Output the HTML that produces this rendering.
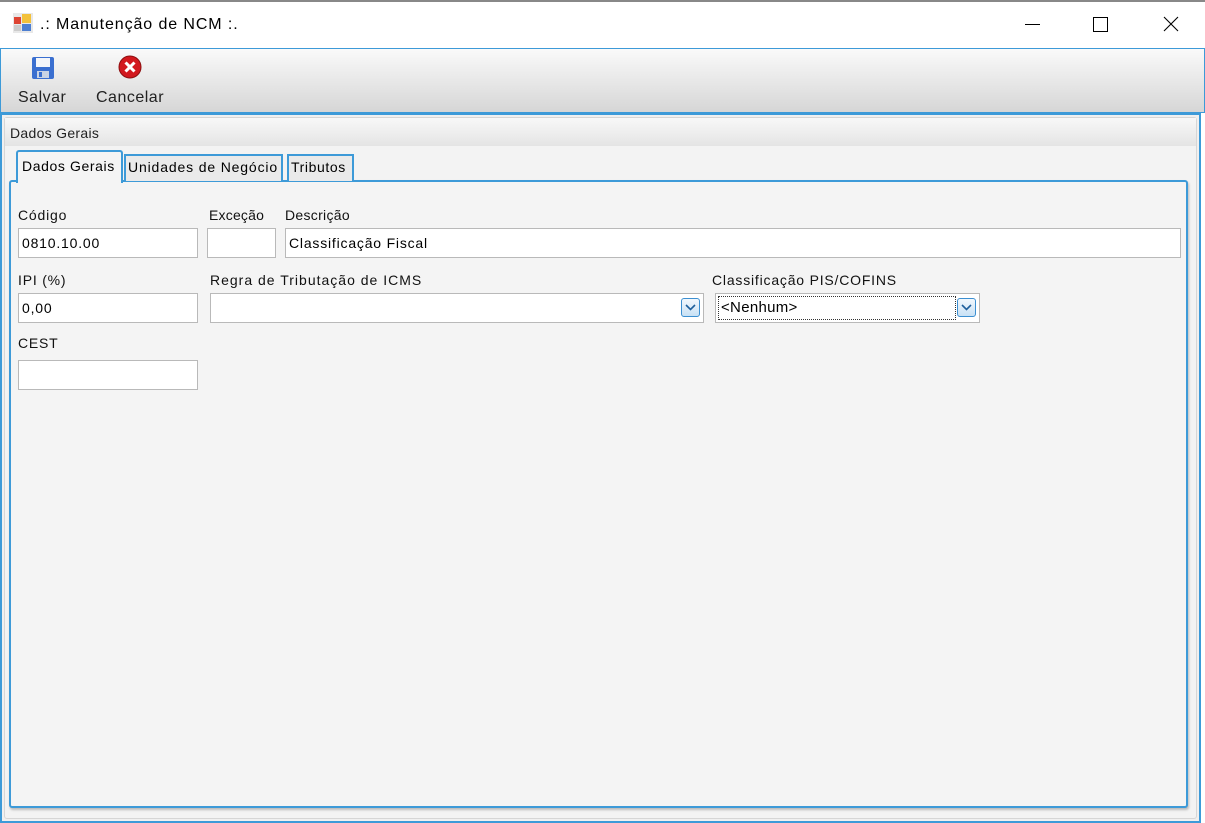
<!DOCTYPE html>
<html><head><meta charset="utf-8"><style>
*{box-sizing:border-box;margin:0;padding:0}
body{width:1205px;height:823px;background:#fff;font-family:"Liberation Sans",sans-serif;font-size:14px;color:#000;position:relative;overflow:hidden;letter-spacing:0.8px}
.a{position:absolute}
.inp{position:absolute;background:#fff;border:1px solid #b9b9b9;height:30px;padding:6px 3px;font-size:14px;white-space:nowrap}
.lbl{position:absolute;font-size:14px;color:#111;white-space:nowrap}
.dd{position:absolute;width:19px;height:19px;border:1px solid #3c8fd1;border-radius:3px;background:linear-gradient(#f2f8fd,#c8e1f5)}
</style></head><body>
<div class="a" style="left:0;top:0;width:1205px;height:2px;background:#888"></div>
<svg class="a" style="left:13px;top:13px" width="20" height="20"><rect x="0" y="0" width="20" height="20" fill="#e8e8e8"/><rect x="1" y="4" width="7" height="7" fill="#d43"/><rect x="9" y="1" width="9" height="9" fill="#f3c13a"/><rect x="9" y="11" width="9" height="7" fill="#4d7fd1"/><rect x="1" y="12" width="7" height="6" fill="#ccc"/></svg>
<div class="a" style="left:40px;top:16px;font-size:16px;letter-spacing:0.9px">.: Manutenção de NCM :.</div>
<div class="a" style="left:1025px;top:24px;width:15px;height:1px;background:#000"></div>
<div class="a" style="left:1093px;top:17px;width:15px;height:15px;border:1px solid #000"></div>
<svg class="a" style="left:1163px;top:16px" width="16" height="16"><path d="M1 1L15 15M15 1L1 15" stroke="#000" stroke-width="1.1"/></svg>
<div class="a" style="left:0;top:48px;width:1205px;height:65px;border:1px solid #3d9ad8;background:linear-gradient(#fafafa,#d6d6d6)"></div>
<svg class="a" style="left:31px;top:56px" width="24" height="24"><rect x="1" y="1" width="22" height="22" rx="2" fill="#3a6fd0"/><rect x="5" y="2" width="14" height="9" fill="#f4f6fa"/><rect x="6" y="15" width="12" height="7" fill="#c9d3e4"/><rect x="8" y="16" width="3" height="5" fill="#3a6fd0"/></svg>
<div class="a" style="left:18px;top:89px;font-size:16px;color:#222;letter-spacing:0.5px">Salvar</div>
<svg class="a" style="left:118px;top:55px" width="24" height="24"><circle cx="12" cy="12" r="11" fill="#d2181e"/><circle cx="12" cy="12" r="11" fill="none" stroke="#8c0f10" stroke-width="1"/><path d="M7.5 7.5L16.5 16.5M16.5 7.5L7.5 16.5" stroke="#fff" stroke-width="3"/></svg>
<div class="a" style="left:96px;top:89px;font-size:16px;color:#222;letter-spacing:0.5px">Cancelar</div>
<div class="a" style="left:0;top:113px;width:1201px;height:710px;background:#f0f0f0;border:2px solid #3d9ad8"></div>
<div class="a" style="left:4px;top:117px;width:1193px;height:702px;background:#f3f3f3;border:1px solid #d6d6d6;border-radius:3px"></div>
<div class="a" style="left:5px;top:118px;width:1191px;height:28px;background:linear-gradient(#f8f8f8,#e4e4e4)"></div>
<div class="a" style="left:10px;top:125px;font-size:14px;color:#222;letter-spacing:0.3px">Dados Gerais</div>
<div class="a" style="left:9px;top:180px;width:1179px;height:628px;border:2px solid #3d9ad8;border-radius:3px;background:#f4f4f4;box-shadow:1px 2px 2px #bbb"></div>
<div class="a" style="left:16px;top:150px;width:107px;height:33px;border:2px solid #3d9ad8;border-bottom:none;background:#f4f4f4;border-radius:3px 3px 0 0;padding:6px 0 0 4px;font-size:14px;letter-spacing:0.6px;white-space:nowrap">Dados Gerais</div>
<div class="a" style="left:124px;top:154px;width:159px;height:27px;border:2px solid #3d9ad8;border-bottom:none;background:#eaeaea;padding:3px 0 0 2px;font-size:14px;letter-spacing:0.85px;white-space:nowrap">Unidades de Negócio</div>
<div class="a" style="left:287px;top:154px;width:67px;height:27px;border:2px solid #3d9ad8;border-bottom:none;background:#eaeaea;padding:3px 0 0 2px;font-size:14px;letter-spacing:0.6px">Tributos</div>
<div class="lbl" style="left:18px;top:207px">Código</div>
<div class="inp" style="left:18px;top:228px;width:180px">0810.10.00</div>
<div class="lbl" style="left:209px;top:207px;letter-spacing:0.2px">Exceção</div>
<div class="inp" style="left:207px;top:228px;width:69px"></div>
<div class="lbl" style="left:285px;top:207px;letter-spacing:0.3px">Descrição</div>
<div class="inp" style="left:285px;top:228px;width:896px">Classificação Fiscal</div>
<div class="lbl" style="left:18px;top:272px">IPI (%)</div>
<div class="inp" style="left:18px;top:293px;width:180px">0,00</div>
<div class="lbl" style="left:210px;top:272px;letter-spacing:1px">Regra de Tributação de ICMS</div>
<div class="inp" style="left:210px;top:293px;width:494px"></div>
<div class="dd" style="left:681px;top:298px"><svg width="17" height="17"><path d="M4 6L8.5 10.5L13 6" fill="none" stroke="#1f5f9c" stroke-width="1.6"/></svg></div>
<div class="lbl" style="left:712px;top:272px">Classificação PIS/COFINS</div>
<div class="inp" style="left:715px;top:293px;width:265px;padding:2px"><div style="border:1px dotted #333;height:24px;width:238px;padding:2px 2px;font-size:15px;letter-spacing:0.3px">&lt;Nenhum&gt;</div></div>
<div class="dd" style="left:957px;top:298px"><svg width="17" height="17"><path d="M4 6L8.5 10.5L13 6" fill="none" stroke="#1f5f9c" stroke-width="1.6"/></svg></div>
<div class="lbl" style="left:18px;top:335px">CEST</div>
<div class="inp" style="left:18px;top:360px;width:180px"></div>
</body></html>
